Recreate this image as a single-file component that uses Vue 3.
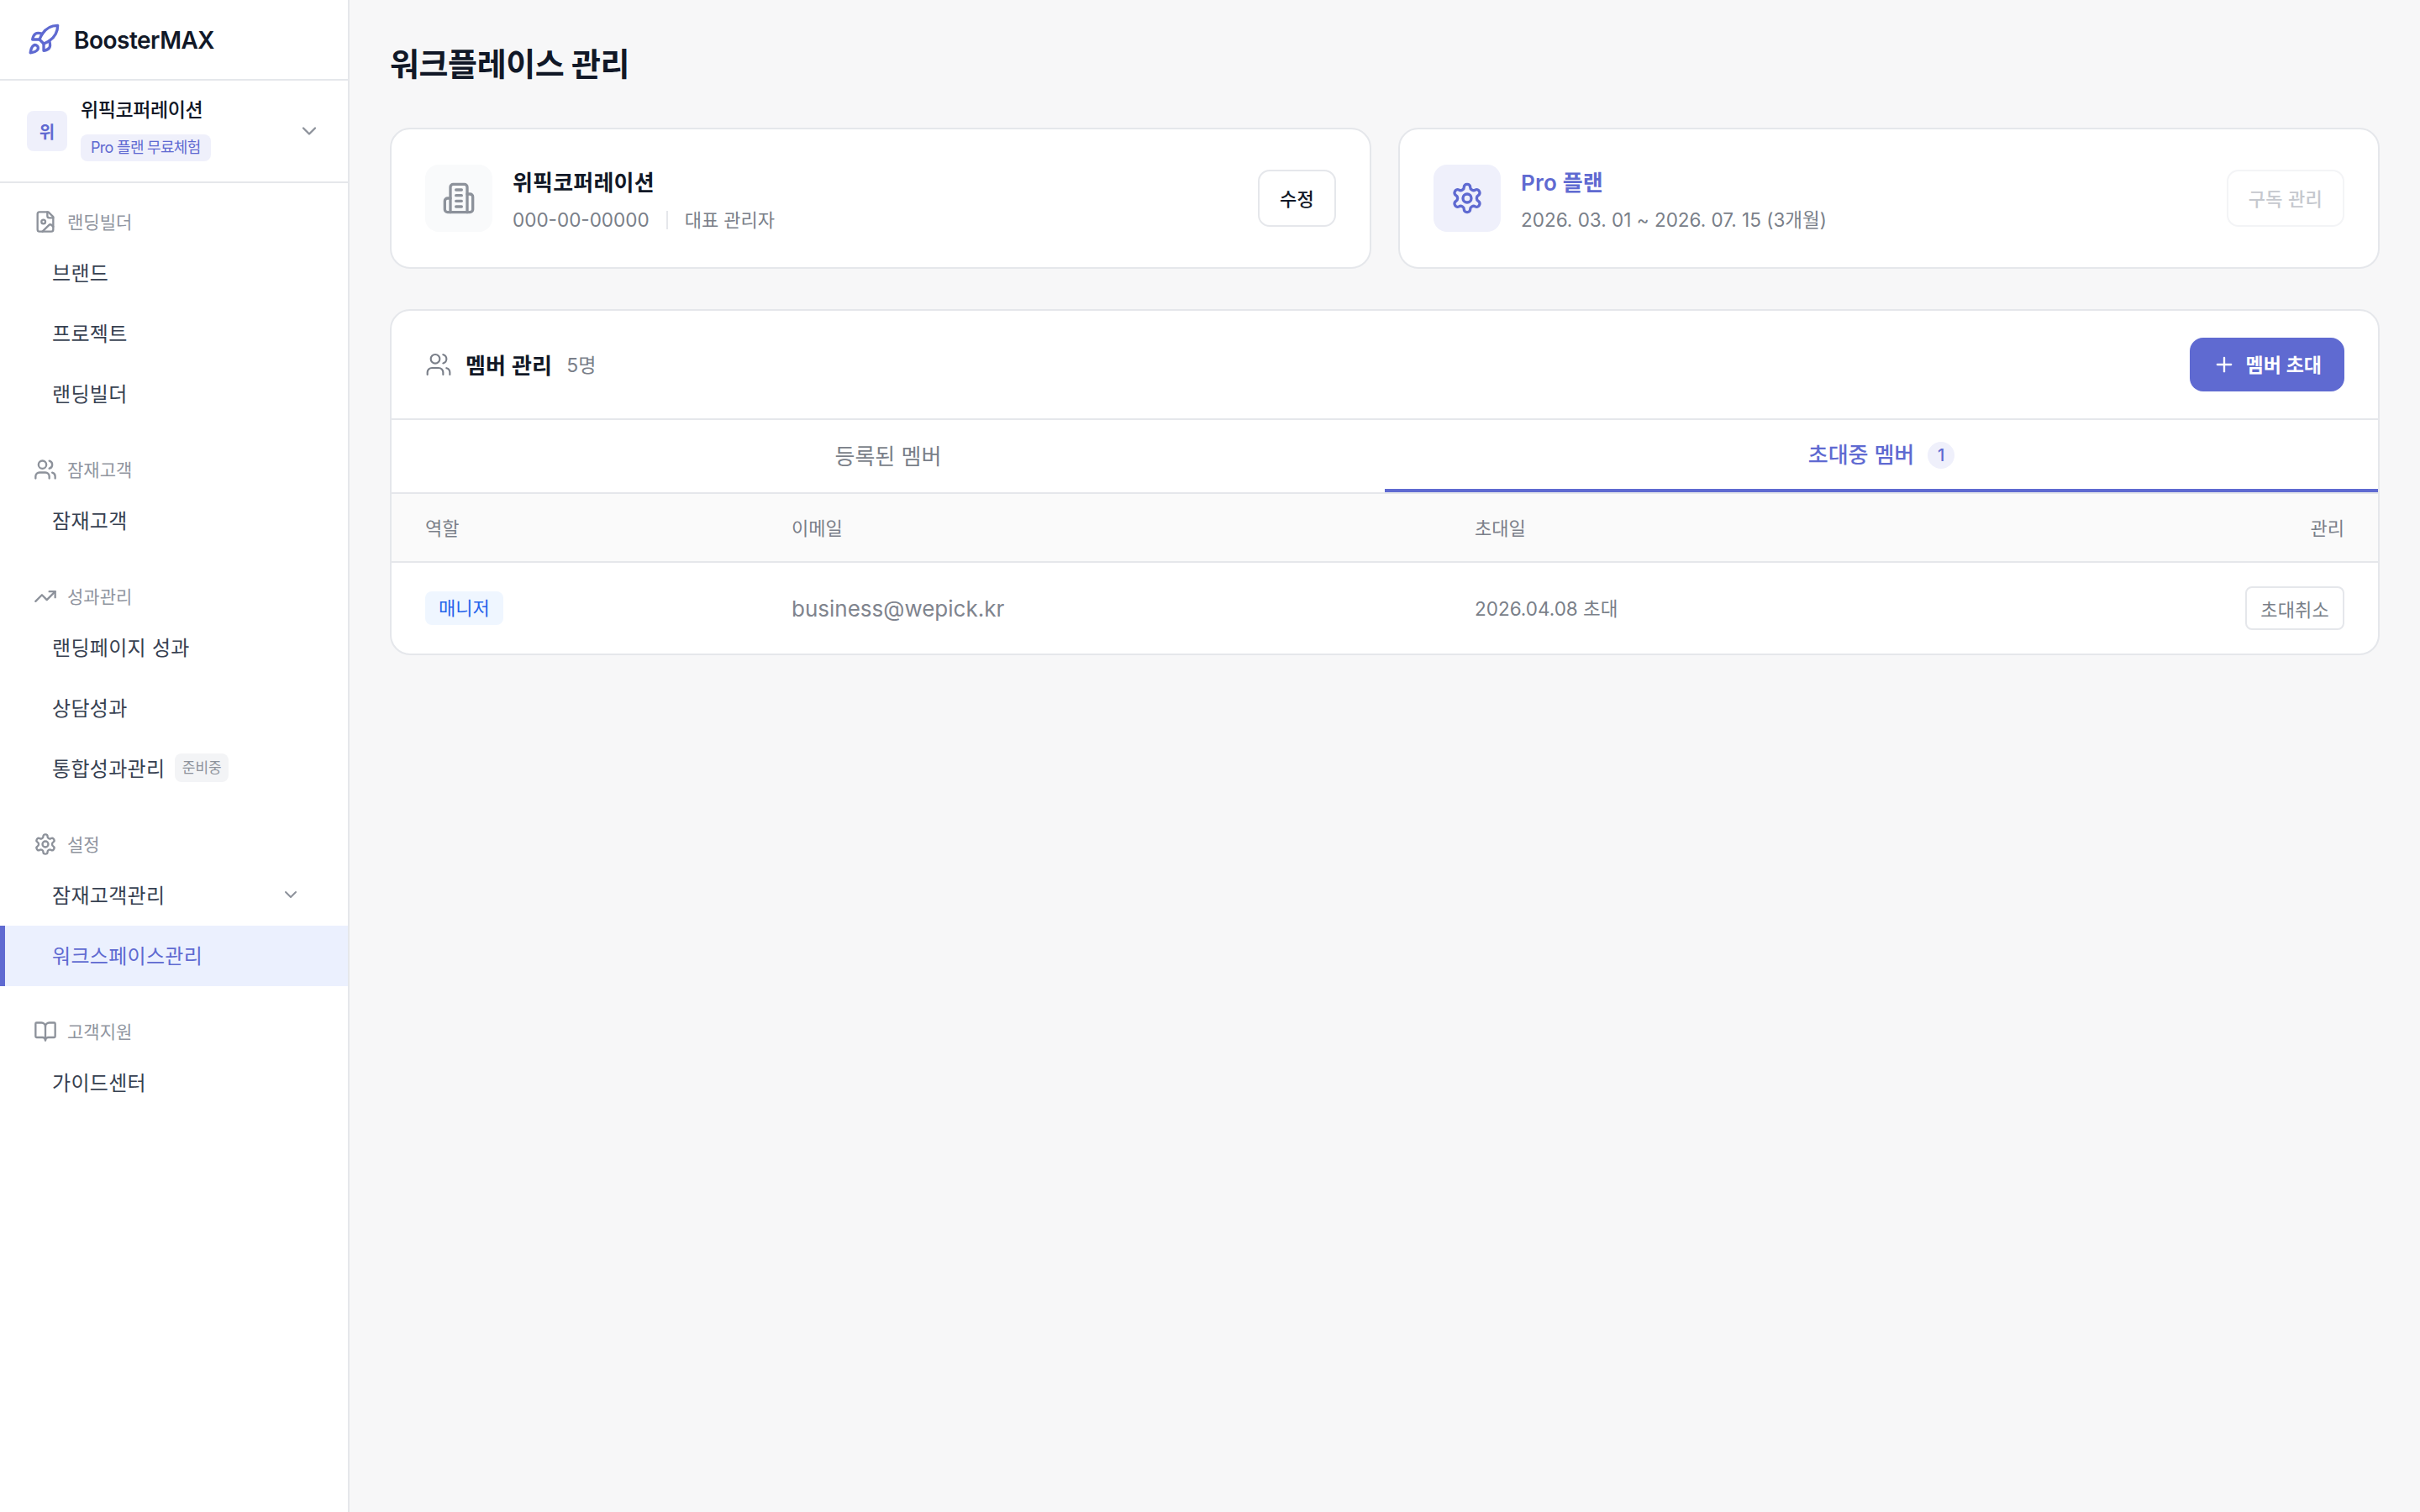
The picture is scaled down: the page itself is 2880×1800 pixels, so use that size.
<script setup>
// BoosterMAX workspace settings page
const invited = [
  { role: '매니저', email: 'business@wepick.kr', date: '2026.04.08 초대' },
]
</script>

<template>
  <div class="page">
    <aside class="sidebar">
      <div class="brand">
        <svg class="brand__icon" viewBox="0 0 24 24" fill="none" stroke="currentColor" stroke-linecap="round" stroke-linejoin="round">
          <path d="M4.5 16.5c-1.5 1.26-2 5-2 5s3.74-.5 5-2c.71-.84.7-2.13-.09-2.91a2.18 2.18 0 0 0-2.91-.09z" />
          <path d="m12 15-3-3a22 22 0 0 1 2-3.95A12.88 12.88 0 0 1 22 2c0 2.72-.78 7.5-6 11a22.35 22.35 0 0 1-4 2z" />
          <path d="M9 12H4s.55-3.03 2-4c1.62-1.08 5 0 5 0" />
          <path d="M12 15v5s3.03-.55 4-2c1.08-1.62 0-5 0-5" />
        </svg>
        <span class="brand__name">BoosterMAX</span>
      </div>

      <div class="workspace">
        <span class="workspace__avatar">위</span>
        <div class="workspace__info">
          <span class="workspace__name">위픽코퍼레이션</span>
          <span class="workspace__plan">Pro 플랜 무료체험</span>
        </div>
        <svg class="chevron workspace__chevron" viewBox="0 0 24 24" fill="none" stroke="currentColor" stroke-linecap="round" stroke-linejoin="round"><path d="m6 9 6 6 6-6" /></svg>
      </div>

      <nav class="nav">
        <div class="nav__section">
          <div class="nav__label">
            <svg viewBox="0 0 24 24" fill="none" stroke="currentColor" stroke-linecap="round" stroke-linejoin="round">
              <path d="M15 2H6a2 2 0 0 0-2 2v16a2 2 0 0 0 2 2h12a2 2 0 0 0 2-2V7Z" />
              <path d="M14 2v4a2 2 0 0 0 2 2h4" />
              <circle cx="10" cy="12" r="2" />
              <path d="m20 17-1.296-1.296a2.41 2.41 0 0 0-3.408 0L9 22" />
            </svg>
            <span>랜딩빌더</span>
          </div>
          <a class="nav__item">브랜드</a>
          <a class="nav__item">프로젝트</a>
          <a class="nav__item">랜딩빌더</a>
        </div>

        <div class="nav__section">
          <div class="nav__label">
            <svg viewBox="0 0 24 24" fill="none" stroke="currentColor" stroke-linecap="round" stroke-linejoin="round">
              <path d="M16 21v-2a4 4 0 0 0-4-4H6a4 4 0 0 0-4 4v2" />
              <circle cx="9" cy="7" r="4" />
              <path d="M22 21v-2a4 4 0 0 0-3-3.87" />
              <path d="M16 3.13a4 4 0 0 1 0 7.75" />
            </svg>
            <span>잠재고객</span>
          </div>
          <a class="nav__item">잠재고객</a>
        </div>

        <div class="nav__section">
          <div class="nav__label">
            <svg viewBox="0 0 24 24" fill="none" stroke="currentColor" stroke-linecap="round" stroke-linejoin="round">
              <polyline points="22 7 13.5 15.5 8.5 10.5 2 17" />
              <polyline points="16 7 22 7 22 13" />
            </svg>
            <span>성과관리</span>
          </div>
          <a class="nav__item">랜딩페이지 성과</a>
          <a class="nav__item">상담성과</a>
          <a class="nav__item">통합성과관리<span class="nav__soon">준비중</span></a>
        </div>

        <div class="nav__section">
          <div class="nav__label">
            <svg viewBox="0 0 24 24" fill="none" stroke="currentColor" stroke-linecap="round" stroke-linejoin="round">
              <path d="M12.22 2h-.44a2 2 0 0 0-2 2v.18a2 2 0 0 1-1 1.73l-.43.25a2 2 0 0 1-2 0l-.15-.08a2 2 0 0 0-2.73.73l-.22.38a2 2 0 0 0 .73 2.73l.15.1a2 2 0 0 1 1 1.72v.51a2 2 0 0 1-1 1.74l-.15.09a2 2 0 0 0-.73 2.73l.22.38a2 2 0 0 0 2.73.73l.15-.08a2 2 0 0 1 2 0l.43.25a2 2 0 0 1 1 1.73V20a2 2 0 0 0 2 2h.44a2 2 0 0 0 2-2v-.18a2 2 0 0 1 1-1.73l.43-.25a2 2 0 0 1 2 0l.15.08a2 2 0 0 0 2.73-.73l.22-.39a2 2 0 0 0-.73-2.73l-.15-.08a2 2 0 0 1-1-1.74v-.5a2 2 0 0 1 1-1.74l.15-.09a2 2 0 0 0 .73-2.73l-.22-.38a2 2 0 0 0-2.73-.73l-.15.08a2 2 0 0 1-2 0l-.43-.25a2 2 0 0 1-1-1.73V4a2 2 0 0 0-2-2z" />
              <circle cx="12" cy="12" r="3" />
            </svg>
            <span>설정</span>
          </div>
          <a class="nav__item nav__item--split">
            잠재고객관리
            <svg class="chevron nav__chevron" viewBox="0 0 24 24" fill="none" stroke="currentColor" stroke-linecap="round" stroke-linejoin="round"><path d="m6 9 6 6 6-6" /></svg>
          </a>
          <a class="nav__item nav__item--active">워크스페이스관리</a>
        </div>

        <div class="nav__section">
          <div class="nav__label">
            <svg viewBox="0 0 24 24" fill="none" stroke="currentColor" stroke-linecap="round" stroke-linejoin="round">
              <path d="M12 7v14" />
              <path d="M3 18a1 1 0 0 1-1-1V4a1 1 0 0 1 1-1h5a4 4 0 0 1 4 4 4 4 0 0 1 4-4h5a1 1 0 0 1 1 1v13a1 1 0 0 1-1 1h-6a3 3 0 0 0-3 3 3 3 0 0 0-3-3z" />
            </svg>
            <span>고객지원</span>
          </div>
          <a class="nav__item">가이드센터</a>
        </div>
      </nav>
    </aside>

    <main class="main">
      <h1 class="main__title">워크플레이스 관리</h1>

      <div class="summary">
        <section class="card summary__card">
          <span class="summary__icon">
            <svg viewBox="0 0 24 24" fill="none" stroke="currentColor" stroke-linecap="round" stroke-linejoin="round">
              <path d="M6 22V4a2 2 0 0 1 2-2h8a2 2 0 0 1 2 2v18Z" />
              <path d="M6 12H4a2 2 0 0 0-2 2v6a2 2 0 0 0 2 2h2" />
              <path d="M18 9h2a2 2 0 0 1 2 2v9a2 2 0 0 1-2 2h-2" />
              <path d="M10 6h4" />
              <path d="M10 10h4" />
              <path d="M10 14h4" />
              <path d="M10 18h4" />
            </svg>
          </span>
          <div class="summary__text">
            <strong class="summary__name">위픽코퍼레이션</strong>
            <span class="summary__sub">000-00-00000<i class="summary__divider" /><span class="summary__role">대표 관리자</span></span>
          </div>
          <button type="button" class="btn">수정</button>
        </section>

        <section class="card summary__card">
          <span class="summary__icon summary__icon--accent">
            <svg viewBox="0 0 24 24" fill="none" stroke="currentColor" stroke-linecap="round" stroke-linejoin="round">
              <path d="M12.22 2h-.44a2 2 0 0 0-2 2v.18a2 2 0 0 1-1 1.73l-.43.25a2 2 0 0 1-2 0l-.15-.08a2 2 0 0 0-2.73.73l-.22.38a2 2 0 0 0 .73 2.73l.15.1a2 2 0 0 1 1 1.72v.51a2 2 0 0 1-1 1.74l-.15.09a2 2 0 0 0-.73 2.73l.22.38a2 2 0 0 0 2.73.73l.15-.08a2 2 0 0 1 2 0l.43.25a2 2 0 0 1 1 1.73V20a2 2 0 0 0 2 2h.44a2 2 0 0 0 2-2v-.18a2 2 0 0 1 1-1.73l.43-.25a2 2 0 0 1 2 0l.15.08a2 2 0 0 0 2.73-.73l.22-.39a2 2 0 0 0-.73-2.73l-.15-.08a2 2 0 0 1-1-1.74v-.5a2 2 0 0 1 1-1.74l.15-.09a2 2 0 0 0 .73-2.73l-.22-.38a2 2 0 0 0-2.73-.73l-.15.08a2 2 0 0 1-2 0l-.43-.25a2 2 0 0 1-1-1.73V4a2 2 0 0 0-2-2z" />
              <circle cx="12" cy="12" r="3" />
            </svg>
          </span>
          <div class="summary__text">
            <strong class="summary__name summary__name--accent">Pro 플랜</strong>
            <span class="summary__sub">2026. 03. 01 ~ 2026. 07. 15 (3개월)</span>
          </div>
          <button type="button" class="btn btn--disabled">구독 관리</button>
        </section>
      </div>

      <section class="card members">
        <header class="members__head">
          <svg class="members__icon" viewBox="0 0 24 24" fill="none" stroke="currentColor" stroke-linecap="round" stroke-linejoin="round">
            <path d="M16 21v-2a4 4 0 0 0-4-4H6a4 4 0 0 0-4 4v2" />
            <circle cx="9" cy="7" r="4" />
            <path d="M22 21v-2a4 4 0 0 0-3-3.87" />
            <path d="M16 3.13a4 4 0 0 1 0 7.75" />
          </svg>
          <h2 class="members__title">멤버 관리</h2>
          <span class="members__count">5명</span>
          <button type="button" class="invite">
            <svg viewBox="0 0 24 24" fill="none" stroke="currentColor" stroke-linecap="round" stroke-linejoin="round"><path d="M5 12h14" /><path d="M12 5v14" /></svg>
            <span class="invite__label">멤버 초대</span>
          </button>
        </header>

        <div class="tabs">
          <div class="tabs__tab"><span class="tabs__label">등록된 멤버</span></div>
          <div class="tabs__tab tabs__tab--active"><span class="tabs__label">초대중 멤버</span><span class="tabs__badge">1</span></div>
        </div>

        <div class="table">
          <div class="table__row table__row--head">
            <span>역할</span>
            <span>이메일</span>
            <span>초대일</span>
            <span class="table__end">관리</span>
          </div>
          <div v-for="item in invited" :key="item.email" class="table__row">
            <span><span class="role">{{ item.role }}</span></span>
            <span class="table__email">{{ item.email }}</span>
            <span class="table__date">{{ item.date }}</span>
            <span class="table__end"><button type="button" class="cancel">초대취소</button></span>
          </div>
        </div>
      </section>
    </main>
  </div>
</template>

<style scoped>
.page {
  --accent: #5f6ad1;
  --accent-soft: #eff0fb;
  --line: #e5e7eb;
  --ink: #111827;
  --muted: #7a7f89;
  --icon: #8d929b;
  display: flex;
  min-height: 1800px;
  background: #f7f7f8;
  color: var(--ink);
  font-family: Inter, "Noto Sans CJK KR", sans-serif;
}

.sidebar {
  flex: 0 0 416px;
  box-sizing: border-box;
  background: #fff;
  border-right: 2px solid var(--line);
}

.brand {
  display: flex;
  align-items: center;
  gap: 16px;
  height: 96px;
  box-sizing: border-box;
  padding-left: 32px;
  border-bottom: 2px solid var(--line);
}

.brand__icon {
  width: 40px;
  height: 40px;
  stroke-width: 2;
  color: var(--accent);
}

.brand__name {
  padding-top: 2px;
  font-size: 28px;
  font-weight: 600;
  letter-spacing: -0.5px;
}

.workspace {
  display: flex;
  align-items: center;
  gap: 16px;
  height: 122px;
  box-sizing: border-box;
  padding: 0 32px;
  border-bottom: 2px solid var(--line);
}

.workspace__avatar {
  flex: 0 0 48px;
  height: 48px;
  display: flex;
  align-items: center;
  justify-content: center;
  border-radius: 8px;
  background: var(--accent-soft);
  color: var(--accent);
  font-size: 20px;
  font-weight: 600;
}

.workspace__info {
  flex: 1;
  display: flex;
  flex-direction: column;
  align-items: flex-start;
  gap: 13px;
  padding-bottom: 5px;
}

.workspace__name {
  font-size: 23px;
  line-height: 32px;
  font-weight: 500;
  letter-spacing: -0.4px;
}

.workspace__plan {
  padding: 0 12px;
  height: 32px;
  line-height: 32px;
  border-radius: 8px;
  background: var(--accent-soft);
  color: var(--accent);
  font-size: 18px;
  letter-spacing: -0.7px;
}

.chevron {
  stroke-width: 2;
  color: var(--icon);
}

.workspace__chevron {
  width: 28px;
  height: 28px;
}

.nav {
  display: flex;
  flex-direction: column;
  padding-top: 26px;
  gap: 34px;
}

.nav__label {
  display: flex;
  align-items: center;
  gap: 12px;
  height: 40px;
  padding-left: 40px;
  margin-bottom: 5px;
  font-size: 21px;
  color: #9095a0;
}

.nav__label span {
  padding-bottom: 2px;
}

.nav__label svg {
  width: 28px;
  height: 28px;
  stroke-width: 2;
  color: var(--icon);
}

.nav__item {
  display: flex;
  align-items: center;
  height: 72px;
  box-sizing: border-box;
  padding-left: 62px;
  padding-bottom: 3px;
  font-size: 24px;
  letter-spacing: 0.3px;
  color: #374151;
}

.nav__item--split {
  justify-content: space-between;
  padding-right: 56px;
}

.nav__chevron {
  width: 24px;
  height: 24px;
}

.nav__item--active {
  padding-left: 56px;
  border-left: 6px solid var(--accent);
  background: #ebf0fe;
  color: var(--accent);
}

.nav__soon {
  margin-left: 12px;
  padding: 0 8.5px;
  height: 34px;
  line-height: 34px;
  border-radius: 8px;
  background: #f3f4f6;
  color: var(--icon);
  font-size: 17px;
  letter-spacing: 0;
}

.main {
  flex: 1;
  min-width: 0;
  padding: 48px 48px 0;
}

.main__title {
  margin: 0 0 48px;
  font-size: 38px;
  line-height: 56px;
  font-weight: 700;
  letter-spacing: -0.4px;
}

.card {
  box-sizing: border-box;
  background: #fff;
  border: 2px solid var(--line);
  border-radius: 24px;
}

.summary {
  display: grid;
  grid-template-columns: 1fr 1fr;
  gap: 32px;
  margin-bottom: 48px;
}

.summary__card {
  display: flex;
  align-items: center;
  gap: 24px;
  height: 168px;
  padding: 0 40px;
}

.summary__icon {
  flex: 0 0 80px;
  height: 80px;
  display: flex;
  align-items: center;
  justify-content: center;
  border-radius: 16px;
  background: #f9fafb;
  color: var(--icon);
}

.summary__icon svg {
  width: 40px;
  height: 40px;
  stroke-width: 2;
}

.summary__icon--accent {
  background: var(--accent-soft);
  color: var(--accent);
}

.summary__text {
  flex: 1;
  display: flex;
  flex-direction: column;
  gap: 8px;
  padding-top: 8px;
}

.summary__name {
  font-size: 26px;
  line-height: 36px;
  font-weight: 600;
  letter-spacing: 0.2px;
}

.summary__name--accent {
  color: var(--accent);
}

.summary__sub {
  display: flex;
  align-items: center;
  font-size: 22.5px;
  line-height: 36px;
  color: var(--muted);
}

.summary__role {
  font-size: 22px;
}

.summary__divider {
  width: 2px;
  height: 22px;
  margin: 0 20px;
  background: var(--line);
}

.btn {
  height: 68px;
  padding: 0 24px 2px;
  border: 2px solid var(--line);
  border-radius: 14px;
  background: #fff;
  color: var(--ink);
  font: 500 22px Inter, "Noto Sans CJK KR", sans-serif;
  letter-spacing: 0.3px;
}

.btn--disabled {
  border-color: #f3f4f6;
  color: #c5c8ce;
}

.members {
  overflow: hidden;
}

.members__head {
  display: flex;
  align-items: center;
  height: 128px;
  padding: 0 40px;
  border-bottom: 2px solid var(--line);
}

.members__icon {
  width: 32px;
  height: 32px;
  stroke-width: 1.6;
  color: var(--muted);
  margin-right: 16px;
}

.members__title {
  margin: 0 17px 0 0;
  padding-bottom: 2px;
  font-size: 26px;
  font-weight: 600;
  letter-spacing: 0.2px;
}

.members__count {
  padding-bottom: 2px;
  font-size: 23px;
  color: var(--muted);
}

.invite {
  margin-left: auto;
  display: flex;
  align-items: center;
  gap: 12px;
  height: 64px;
  padding: 0 27px;
  border: none;
  border-radius: 16px;
  background: var(--accent);
  color: #fff;
  font: 600 23px Inter, "Noto Sans CJK KR", sans-serif;
}

.invite__label {
  padding-bottom: 2px;
}

.invite svg {
  width: 28px;
  height: 28px;
  stroke-width: 2;
}

.tabs {
  display: grid;
  grid-template-columns: 1fr 1fr;
  height: 88px;
  border-bottom: 2px solid var(--line);
  box-sizing: border-box;
}

.tabs__tab {
  display: flex;
  align-items: center;
  justify-content: center;
  font-size: 26px;
  color: var(--muted);
}

.tabs__label {
  margin-bottom: 3px;
}

.tabs__tab--active {
  color: var(--accent);
  border-bottom: 4px solid var(--accent);
  font-weight: 500;
}

.tabs__badge {
  width: 32px;
  height: 32px;
  margin: 2px 0 0 16px;
  display: flex;
  align-items: center;
  justify-content: center;
  border-radius: 50%;
  background: var(--accent-soft);
  font-size: 20px;
}

.table__row {
  display: grid;
  grid-template-columns: 436px 813px 1fr auto;
  align-items: center;
  height: 108px;
  padding: 0 40px;
}

.table__row--head {
  height: 78px;
  padding-bottom: 2px;
  background: #fafafa;
  border-bottom: 2px solid var(--line);
  font-size: 22px;
  color: var(--muted);
}

.table__end {
  justify-self: end;
}

.role {
  display: inline-block;
  height: 40px;
  line-height: 40px;
  padding: 0 16px;
  border-radius: 8px;
  background: #eff6ff;
  color: #2563eb;
  font-size: 22px;
}

.table__email {
  font-size: 26px;
  color: #7f848e;
}

.table__date {
  padding-bottom: 2px;
  font-size: 22.5px;
  color: var(--muted);
}

.cancel {
  height: 52px;
  padding: 0 16px;
  border: 2px solid var(--line);
  border-radius: 8px;
  background: #fff;
  color: var(--muted);
  font: 400 22px Inter, "Noto Sans CJK KR", sans-serif;
  letter-spacing: 0.2px;
}
</style>
